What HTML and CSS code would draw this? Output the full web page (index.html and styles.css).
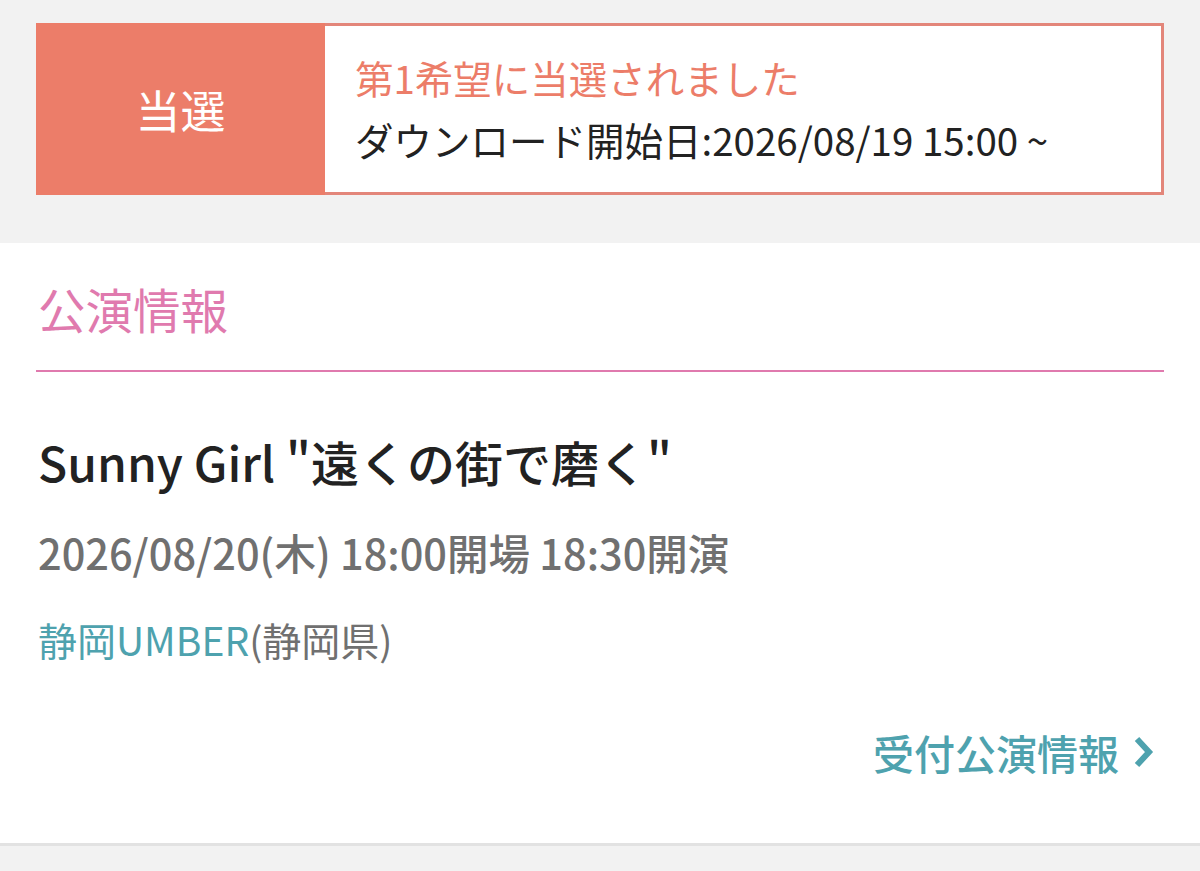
FILE: index.html
```html
<!DOCTYPE html>
<html lang="ja">
<head>
<meta charset="utf-8">
<link rel="stylesheet" href="styles.css">
</head>
<body>
<div class="top">
  <div class="banner">
    <div class="badge">当選</div>
    <div class="msg">
      <div class="msg-title">第1希望に当選されました</div>
      <div class="msg-sub">ダウンロード開始日:2026/08/19 15:00 ~</div>
    </div>
  </div>
</div>
<div class="card">
  <div class="card-head">公演情報</div>
  <div class="card-body">
    <div class="event-title">Sunny Girl "遠くの街で磨く"</div>
    <div class="event-date">2026/08/20(木) 18:00開場 18:30開演</div>
    <div class="event-venue"><span class="venue-name">静岡UMBER</span>(静岡県)</div>
    <div class="link-row">
      <a class="more-link">受付公演情報<svg class="chev" viewBox="0 0 22 34" width="22" height="34"><path d="M4 4 L16 17 L4 30" fill="none" stroke="currentColor" stroke-width="6"/></svg></a>
    </div>
  </div>
</div>
<div class="bottom"></div>
</body>
</html>
```

FILE: styles.css
```css
html, body {
  margin: 0;
  padding: 0;
  background: #f2f2f2;
  font-family: "Noto Sans CJK JP", "Noto Sans", sans-serif;
}
.top {
  padding: 23px 36px 48px;
}
.banner {
  display: flex;
  height: 172px;
  box-sizing: border-box;
  border: 3px solid #e3867a;
  background: #fff;
}
.badge {
  width: 289px;
  margin: -3px 0 -3px -3px;
  background: #ec7d69;
  color: #fff;
  font-size: 45px;
  display: flex;
  align-items: center;
  justify-content: center;
}
.msg {
  display: flex;
  flex-direction: column;
  justify-content: center;
  padding: 0 0 2px 30px;
  gap: 0;
}
.msg-title {
  color: #ec7d69;
  font-size: 38.5px;
  line-height: 62px;
}
.msg-sub {
  color: #222;
  font-size: 38.5px;
  line-height: 62px;
}
.card {
  background: #fff;
  padding: 0 36px;
  height: 603px;
  box-sizing: border-box;
  border-bottom: 3px solid #e2e2e2;
}
.card-head {
  color: #e07aae;
  font-size: 47.5px;
  line-height: 56px;
  padding: 38px 0 33px 2px;
  border-bottom: 2px solid #e07aae;
}
.card-body {
  padding-left: 2px;
}
.event-title {
  color: #222;
  font-size: 48px;
  font-weight: 500;
  line-height: 60px;
  margin-top: 59px;
}
.event-date {
  color: #707070;
  font-size: 41.5px;
  font-weight: 500;
  line-height: 50px;
  margin-top: 36px;
}
.event-venue {
  color: #707070;
  font-size: 39px;
  line-height: 50px;
  margin-top: 37px;
}
.venue-name {
  color: #4ea2ae;
}
.link-row {
  display: flex;
  justify-content: flex-end;
  margin-top: 63px;
  padding-right: 9px;
}
.more-link {
  color: #4ea2ae;
  font-size: 41px;
  font-weight: 500;
  line-height: 50px;
  display: flex;
  align-items: center;
  gap: 14px;
}
.chev {
  display: block;
}
.bottom {
  height: 30px;
}
```
